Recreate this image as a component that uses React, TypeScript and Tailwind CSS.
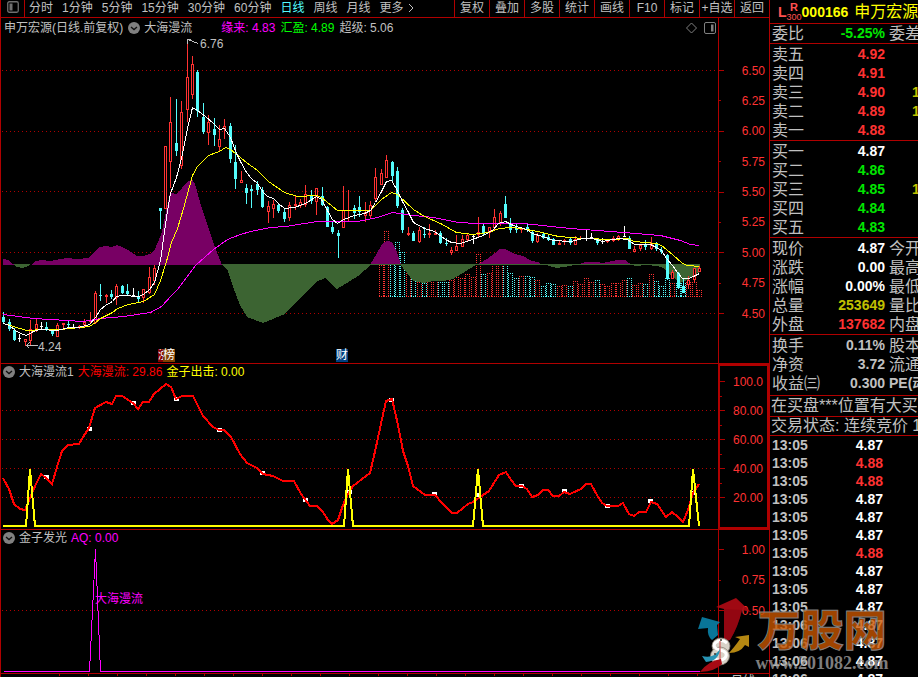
import React from "react";

type Kind = "up" | "down" | "flat";

// kind, high, body top, body bottom, low
type Candle = [Kind, number, number, number, number];

interface AxisMark {
    label?: string;
}

interface Quote {
    name: string;
    price: string;
    color: string;
    volume?: string;
}

interface Stat {
    name: string;
    value: string;
    color: string;
    next: string;
}

const periods = ["分时", "1分钟", "5分钟", "15分钟", "30分钟", "60分钟", "日线", "周线", "月线"];
const tools = ["复权", "叠加", "多股", "统计", "画线", "F10", "标记", "+自选", "返回"];

const candles: Candle[] = [
    ["down", 312, 317, 322, 323], ["down", 319, 322, 329, 331], ["down", 328, 330, 340, 341], ["flat", 334, 338, 338, 342],
    ["up", 339, 339, 342, 346], ["up", 320, 329, 341, 345], ["up", 319, 324, 329, 332], ["flat", 322, 326, 326, 329],
    ["down", 322, 327, 329, 331], ["down", 329, 331, 334, 336], ["up", 323, 325, 337, 337], ["up", 323, 323, 325, 330],
    ["down", 321, 324, 325, 327], ["flat", 324, 327, 327, 328], ["up", 325, 326, 328, 329], ["up", 319, 322, 325, 328],
    ["up", 312, 320, 322, 324], ["up", 291, 293, 323, 324], ["down", 284, 295, 296, 301], ["up", 294, 295, 297, 303],
    ["down", 290, 294, 297, 299], ["up", 284, 286, 298, 305], ["down", 285, 286, 293, 294], ["down", 284, 291, 294, 295],
    ["flat", 288, 295, 295, 297], ["down", 291, 296, 299, 302], ["up", 289, 289, 298, 303], ["up", 267, 277, 293, 294],
    ["up", 265, 268, 281, 285], ["down", 208, 208, 211, 229], ["up", 146, 146, 209, 209], ["up", 97, 122, 162, 188],
    ["down", 99, 143, 151, 156], ["up", 101, 112, 166, 169], ["up", 40, 77, 110, 122], ["up", 56, 64, 95, 99],
    ["down", 70, 72, 111, 117], ["down", 103, 117, 132, 134], ["up", 115, 122, 133, 145], ["down", 118, 129, 135, 146],
    ["up", 125, 139, 147, 151], ["up", 119, 126, 129, 139], ["down", 123, 126, 159, 163], ["down", 145, 162, 179, 189],
    ["up", 171, 180, 183, 183], ["down", 184, 188, 193, 204], ["down", 185, 189, 191, 208], ["down", 181, 184, 190, 195],
    ["down", 187, 190, 207, 208], ["up", 201, 206, 212, 223], ["up", 200, 204, 209, 218], ["down", 203, 205, 211, 213],
    ["down", 208, 212, 219, 222], ["up", 202, 205, 218, 221], ["up", 196, 204, 206, 210], ["up", 199, 202, 206, 208],
    ["up", 185, 194, 205, 207], ["down", 190, 195, 201, 204], ["up", 188, 188, 202, 215], ["down", 187, 196, 205, 206],
    ["down", 206, 207, 227, 227], ["down", 222, 227, 232, 234], ["down", 230, 233, 236, 258], ["up", 186, 210, 228, 228],
    ["up", 190, 210, 211, 222], ["down", 205, 208, 213, 219], ["down", 196, 207, 212, 217], ["up", 202, 212, 216, 222],
    ["up", 201, 205, 216, 218], ["up", 168, 177, 199, 202], ["up", 169, 173, 185, 185], ["up", 155, 160, 178, 178],
    ["down", 161, 162, 176, 183], ["down", 167, 171, 206, 208], ["down", 208, 210, 230, 233], ["up", 227, 233, 235, 236],
    ["down", 231, 233, 241, 241], ["up", 227, 230, 242, 243], ["down", 227, 234, 235, 238], ["up", 224, 233, 235, 238],
    ["up", 230, 233, 235, 235], ["down", 231, 233, 243, 244], ["down", 238, 243, 244, 246], ["up", 247, 250, 253, 255],
    ["up", 235, 246, 251, 251], ["up", 235, 239, 247, 247], ["up", 233, 235, 240, 242], ["flat", 234, 236, 236, 244],
    ["up", 217, 232, 235, 237], ["down", 223, 226, 234, 235], ["up", 227, 227, 233, 238], ["up", 209, 217, 228, 231],
    ["up", 211, 213, 224, 226], ["down", 196, 204, 218, 218], ["down", 218, 224, 230, 233], ["down", 223, 228, 230, 233],
    ["up", 227, 228, 230, 233], ["down", 223, 227, 229, 232], ["down", 230, 232, 241, 243], ["up", 233, 235, 242, 243],
    ["down", 233, 234, 238, 239], ["down", 235, 237, 240, 241], ["down", 238, 239, 245, 245], ["up", 241, 243, 245, 245],
    ["up", 239, 240, 242, 245], ["down", 238, 239, 243, 245], ["up", 236, 239, 245, 245], ["up", 236, 238, 239, 240],
    ["flat", 230, 238, 238, 241], ["flat", 233, 237, 237, 238], ["down", 238, 239, 243, 245], ["flat", 238, 241, 241, 244],
    ["up", 240, 240, 242, 243], ["up", 236, 238, 241, 242], ["up", 235, 236, 239, 241], ["flat", 226, 236, 236, 237],
    ["down", 236, 238, 249, 249], ["up", 246, 249, 252, 252], ["up", 244, 245, 249, 251], ["down", 240, 245, 247, 250],
    ["up", 237, 243, 249, 250], ["down", 242, 244, 249, 251], ["down", 247, 250, 252, 254], ["down", 254, 255, 279, 280],
    ["up", 270, 272, 279, 279], ["down", 272, 273, 288, 289], ["down", 278, 286, 293, 293], ["up", 276, 280, 285, 289],
    ["up", 268, 268, 280, 283], ["up", 266, 268, 272, 272],
];

// tops of the turnover bars, the first one belongs to candle 70
const VOLUME_START = 70;
const volumeTops = [
    265, 231, 263, 242, 252, 273, 277, 282, 283, 280, 280, 282, 282, 280, 277, 278, 274, 277, 254, 274,
    273, 264, 258, 264, 273, 278, 276, 276, 277, 280, 286, 283, 284, 286, 285, 286, 281, 284, 278, 282,
    280, 284, 286, 283, 283, 280, 278, 285, 283, 284, 274, 281, 286, 278, 283, 283, 283, 282, 282, 290,
];

const MA_WHITE =
    "3,323 9,325 15,330 20,333 26,335 33,331 39,329 57,330 68,327 78,327 89,324 95,317 100,309 105,305 112,301 116,296 122,295 138,296 143,294 149,289 154,282 160,260 166,217 170,193 176,177 181,158 187,128 192,107 197,110 205,116 213,123 219,129 224,128 230,137 236,153 240,161 246,172 251,178 257,183 263,192 267,196 273,198 278,203 284,208 294,207 305,203 316,196 321,199 327,210 332,219 337,223 343,219 354,215 364,213 370,210 375,202 381,191 386,181 391,180 397,190 402,201 408,212 413,222 424,228 434,231 445,239 451,242 460,243 472,239 483,235 493,229 498,223 505,221 513,225 526,229 532,233 542,236 553,240 570,241 583,238 592,238 602,241 618,238 627,239 634,244 645,244 650,244 656,247 661,250 666,258 672,265 677,272 682,278 688,278 693,276 699,273";
const MA_YELLOW =
    "3,323 26,330 43,329 60,329 89,326 95,322 100,318 112,312 117,308 128,304 143,301 154,294 160,280 166,261 171,242 177,228 183,208 192,175 197,166 208,155 219,151 225,147 230,149 235,153 246,162 257,170 268,181 284,192 297,196 316,195 321,197 337,210 370,210 381,199 391,192 397,194 413,209 424,216 440,223 456,232 472,234 488,232 499,228 510,227 521,228 537,231 558,236 583,238 613,239 627,238 634,241 656,243 661,245 672,254 682,263 687,265 699,266";
const MA_PINK =
    "3,314 33,318 83,321 100,318 123,316 150,312 161,306 171,295 177,289 195,265 213,249 227,239 240,234 250,231 270,227 285,226 317,221 357,221 377,217 392,212 413,215 433,217 458,222 477,223 523,223 570,228 623,232 660,235 680,240 690,244 699,245";

const PURPLE_AREA =
    "M3 265V259L8 260L13 264L15 265ZM31 265L35 261L42 260L50 261L67 258L77 259L88 258L95 251L100 247L106 246L112 247L117 245L122 247L128 250L137 256L143 256L150 254L154 251L158 242L162 232L167 207L170 193L177 194L182 188L186 183L192 179L195 184L200 202L207 223L213 242L222 265ZM370 265L377 253L383 243L387 241L392 242L397 252L401 265ZM477 265L487 259L495 253L500 249L505 249L515 254L523 256L532 261L538 262L543 265ZM577 265L585 262L597 262L603 263L617 260L625 260L632 265Z";
const GREEN_AREA =
    "M13 264L17 267L23 268L28 266L31 264ZM222 264L228 271L233 287L240 305L247 317L263 323L285 314L300 298L316 282L325 278L337 289L350 281L358 276L372 264ZM400 264L407 273L413 281L423 283L433 281L443 281L453 279L463 273L477 264ZM543 264L552 267L557 268L570 266L577 264ZM632 264L635 266L647 265L657 266L663 268L668 273L680 283L687 280L695 275L700 272V264Z";

const WAVE =
    "3,478 9,489 14,504 20,509 25,510 30,498 36,484 41,474 46,478 52,484 57,467 62,451 68,445 79,444 83,437 89,428 95,408 106,402 112,404 116,396 122,396 133,403 138,409 143,402 149,402 154,394 166,384 171,387 176,399 182,396 193,396 203,416 213,427 219,430 224,430 231,437 240,454 247,463 257,468 263,474 273,476 283,481 294,481 301,494 310,506 317,506 323,512 328,520 332,524 338,520 343,505 349,492 353,486 370,473 376,447 382,419 386,401 392,399 398,425 403,451 408,466 413,486 425,495 435,495 442,503 452,513 457,513 468,504 473,502 483,495 489,491 499,475 506,472 511,480 516,486 522,486 527,489 532,497 538,495 543,490 548,490 553,496 559,496 564,492 570,494 581,489 586,484 591,484 597,495 602,503 607,506 618,506 623,503 629,514 634,516 639,512 646,512 651,502 657,504 666,517 672,512 678,517 683,522 688,510 693,493 699,484";
const SPIKES =
    "3,526 26,526 30,469 35,526 344,526 348,469 353,526 473,526 478,469 483,526 689,526 693,469 699,526";
const waveDots = [
    [46, 477], [89, 429], [133, 403], [176, 399], [219, 430], [262, 473], [305, 500], [349, 492],
    [391, 400], [434, 494], [478, 495], [521, 486], [564, 491], [607, 506], [650, 501], [693, 493],
];

const priceMarks: AxisMark[] = [
    { label: "6.50" }, { label: "6.25" }, { label: "6.00" }, { label: "5.75" }, { label: "5.50" },
    { label: "5.25" }, { label: "5.00" }, { label: "4.75" }, { label: "4.50" },
];
const waveMarks: AxisMark[] = [
    { label: "100.0" }, {}, { label: "80.00" }, {}, { label: "60.00" }, {}, { label: "40.00" }, {}, { label: "20.00" },
];
const signalMarks: AxisMark[] = [{ label: "1.00" }, { label: "0.75" }, { label: "0.50" }];

const sells: Quote[] = [
    { name: "卖五", price: "4.92", color: "text-[#ff3232]" },
    { name: "卖四", price: "4.91", color: "text-[#ff3232]" },
    { name: "卖三", price: "4.90", color: "text-[#ff3232]", volume: "1" },
    { name: "卖二", price: "4.89", color: "text-[#ff3232]", volume: "1" },
    { name: "卖一", price: "4.88", color: "text-[#ff3232]" },
];
const buys: Quote[] = [
    { name: "买一", price: "4.87", color: "text-white" },
    { name: "买二", price: "4.86", color: "text-[#00e600]" },
    { name: "买三", price: "4.85", color: "text-[#00e600]", volume: "1" },
    { name: "买四", price: "4.84", color: "text-[#00e600]" },
    { name: "买五", price: "4.83", color: "text-[#00e600]" },
];
const stats: Stat[] = [
    { name: "现价", value: "4.87", color: "text-white", next: "今开" },
    { name: "涨跌", value: "0.00", color: "text-white", next: "最高" },
    { name: "涨幅", value: "0.00%", color: "text-white", next: "最低" },
    { name: "总量", value: "253649", color: "text-[#c0c000]", next: "量比" },
    { name: "外盘", value: "137682", color: "text-[#ff3232]", next: "内盘" },
];
const fundamentals: Stat[] = [
    { name: "换手", value: "0.11%", color: "text-[#c0c0c0]", next: "股本" },
    { name: "净资", value: "3.72", color: "text-[#c0c0c0]", next: "流通" },
    { name: "收益㈢", value: "0.300", color: "text-[#c0c0c0]", next: "PE(动)" },
];
const trades = [
    ["13:05", "4.87"], ["13:05", "4.88"], ["13:05", "4.88"], ["13:05", "4.87"], ["13:05", "4.87"],
    ["13:05", "4.87"], ["13:05", "4.88"], ["13:05", "4.87"], ["13:05", "4.87"], ["13:05", "4.87"],
    ["13:06", "4.87"], ["13:06", "4.87"], ["13:06", "4.87"], ["13:06", "4.87"],
];

const candleX = (index: number) => Math.round(3.2 + index * 5.395);

const GridLine: React.FC<{ y: number }> = ({ y }) => (
    <line x1="2" x2="717" y1={y + 0.5} y2={y + 0.5} stroke="#b00000" strokeDasharray="1 3" />
);

const CandleShape: React.FC<{ candle: Candle; x: number }> = ({ candle, x }) => {
    const [kind, high, top, bottom, low] = candle;
    if (kind === "flat") {
        return (
            <g fill="#ffffff">
                <rect x={x} y={high} width="1" height={low - high} />
                <rect x={x - 1} y={top} width="3" height="1" />
            </g>
        );
    }
    if (kind === "down") {
        return (
            <g fill="#54fcfc">
                <rect x={x} y={high} width="1" height={low - high} />
                <rect x={x - 1} y={top} width="3" height={Math.max(bottom - top, 1)} />
            </g>
        );
    }
    return (
        <g fill="#ff3232">
            <rect x={x} y={high} width="1" height={low - high} />
            <rect x={x - 1} y={top} width="3" height={Math.max(bottom - top, 1)} />
            {bottom - top > 2 && <rect x={x} y={top + 1} width="1" height={bottom - top - 2} fill="#000000" />}
        </g>
    );
};

const CollapseButton: React.FC<{ label: string }> = ({ label }) => (
    <button type="button" aria-label={label} className="shrink-0">
        <svg viewBox="0 0 12 12" className="size-3 block">
            <circle cx="6" cy="6" r="6" fill="#808080" />
            <path d="M3 5l3 2.6L9 5" fill="none" stroke="#101010" strokeWidth="1.3" />
        </svg>
    </button>
);

const AxisScale: React.FC<{ marks: AxisMark[]; className: string }> = ({ marks, className }) => (
    <div className={`flex flex-col justify-between ${className}`}>
        {marks.map((mark, index) => (
            <div key={index} className="flex h-px items-center justify-between pr-1 text-[#ff3232]">
                <span className={index % 2 === 0 ? "h-px w-[5px] bg-[#b00000]" : "h-px w-[2px] bg-[#b00000]"} />
                <span>{mark.label}</span>
            </div>
        ))}
    </div>
);

const Toolbar = () => (
    <nav className="flex h-[18px] items-start border-b border-[#b00000] leading-4 whitespace-nowrap">
        <button type="button" aria-label="侧栏" className="flex h-[17px] w-6 justify-center border-r border-[#b00000] pt-px">
            <svg viewBox="0 0 12 12" className="size-3">
                <rect x="0.75" y="0.75" width="10.5" height="10.5" rx="1.5" fill="none" stroke="#707070" strokeWidth="1.3" />
                <rect x="2.5" y="2.5" width="3" height="7" fill="#707070" />
            </svg>
        </button>
        <div className="flex flex-1 gap-[9px] pl-1">
            {periods.map((period) => (
                <button key={period} type="button" className={period === "日线" ? "text-[#54fcfc]" : ""}>
                    {period}
                </button>
            ))}
            <button type="button" className="flex items-center gap-1">
                更多
                <svg viewBox="0 0 6 10" className="h-2.5 w-1.5">
                    <path d="M1 1l4 4-4 4" fill="none" stroke="#c0c0c0" />
                </svg>
            </button>
        </div>
        {tools.map((tool) => (
            <button key={tool} type="button" className="h-[17px] w-[35px] border-l border-[#b00000] pb-px">
                {tool}
            </button>
        ))}
    </nav>
);

const PricePanel = () => (
    <section className="flex border-b border-[#b00000]">
        <div className="relative min-w-0 flex-1">
            <div className="flex h-5 items-center pl-[3px] pr-[2px] whitespace-nowrap">
                <span>申万宏源(日线.前复权)</span>
                <span className="ml-[5px] mr-1 flex">
                    <CollapseButton label="大海漫流" />
                </span>
                <span>大海漫流</span>
                <span className="ml-[29px] flex gap-[5px]">
                    <span className="text-[#ff00ff]">缘来: 4.83</span>
                    <span className="text-[#00ff00]">汇盈: 4.89</span>
                    <span>超级: 5.06</span>
                </span>
                <svg viewBox="0 0 30 12" className="ml-auto h-3 w-[30px]" fill="none" stroke="#808080">
                    <path d="M5.5 1l5 5-5 5-5-5z" />
                    <rect x="18.5" y="0.5" width="11" height="11" rx="1.5" />
                    <rect x="25" y="2.5" width="2.5" height="7" fill="#808080" stroke="none" />
                </svg>
            </div>
            <svg viewBox="1 38 717 325" preserveAspectRatio="none" className="block h-[325px] w-full" shapeRendering="crispEdges">
                {[70, 131, 191, 252, 313].map((y) => (
                    <GridLine key={y} y={y} />
                ))}
                {volumeTops.map((top, index) => {
                    const x = candleX(index + VOLUME_START);
                    const stroke = candles[index + VOLUME_START][0] === "down" ? "#54fcfc" : "#ff3232";
                    return (
                        <path
                            key={index}
                            d={`M${x - 1.5} ${top}V297M${x + 2.5} ${top}V297M${x - 2} ${top + 0.5}H${x + 3}M${x - 2} 296.5H${x + 3}`}
                            stroke={stroke}
                            strokeDasharray="1 1"
                        />
                    );
                })}
                <path d={PURPLE_AREA} fill="#780064" />
                <path d={GREEN_AREA} fill="#3c6432" />
                <rect x="222" y="264" width="478" height="1" fill="#3c6432" />
                {candles.map((candle, index) => (
                    <CandleShape key={index} candle={candle} x={candleX(index)} />
                ))}
                <g fill="none" transform="translate(0.5 0.5)">
                    <polyline points={MA_PINK} stroke="#ff00ff" />
                    <polyline points={MA_YELLOW} stroke="#ffff00" />
                    <polyline points={MA_WHITE} stroke="#ffffff" />
                    <path d="M198 43L187 39M187 43V39H190M37 345H26M29 342L26 345L29 348" stroke="#c0c0c0" />
                </g>
                <g fill="#c0c0c0" fontSize="12">
                    <text x="200" y="48">6.76</text>
                    <text x="38" y="351">4.24</text>
                </g>
            </svg>
            <div className="absolute bottom-px left-[157px] flex h-[13px] leading-[13px] text-white">
                <span className="w-[5px] overflow-hidden bg-[#800000]">涨</span>
                <span className="bg-[#804000]">榜</span>
            </div>
            <span className="absolute bottom-px left-[335px] h-[13px] bg-[#004080] leading-[13px] text-white">财</span>
        </div>
        <div className="w-[51px] border-l border-[#b00000]">
            <AxisScale marks={priceMarks} className="mt-[52px] h-[244px]" />
        </div>
    </section>
);

const WavePanel = () => (
    <section className="flex border-b border-[#b00000]">
        <div className="min-w-0 flex-1">
            <div className="flex h-4 items-center gap-1 pl-[2px] whitespace-nowrap">
                <CollapseButton label="大海漫流1" />
                <span>大海漫流1</span>
                <span className="text-[#ff0000]">大海漫流: 29.86</span>
                <span className="text-[#ffff00]">金子出击: 0.00</span>
            </div>
            <svg viewBox="1 380 717 149" preserveAspectRatio="none" className="block h-[149px] w-full" shapeRendering="crispEdges">
                {[410, 439, 468, 497].map((y) => (
                    <GridLine key={y} y={y} />
                ))}
                {waveDots.map(([x, y]) => (
                    <rect key={x} x={x - 2} y={y - 2} width="5" height="4" fill="#ffffff" />
                ))}
                <polyline points={WAVE} fill="none" stroke="#ff0000" strokeWidth="2" />
                <polyline points={SPIKES} fill="none" stroke="#ffff00" strokeWidth="2" />
            </svg>
        </div>
        <div className="w-[51px] border-2 border-[#b00000]">
            <AxisScale marks={waveMarks} className="mt-[15px] h-[117px]" />
        </div>
    </section>
);

const SignalPanel = () => (
    <section className="flex border-b border-[#b00000]">
        <div className="min-w-0 flex-1">
            <div className="flex h-4 items-center gap-1 pl-[2px] whitespace-nowrap">
                <CollapseButton label="金子发光" />
                <span>金子发光</span>
                <span className="text-[#ff00ff]">AQ: 0.00</span>
            </div>
            <svg viewBox="1 546 717 127" preserveAspectRatio="none" className="block h-[127px] w-full" shapeRendering="crispEdges">
                <GridLine y={610} />
                <polyline
                    points="3.5,671.5 89.5,671.5 95.5,549.5 100.5,671.5 699.5,671.5"
                    fill="none"
                    stroke="#ff00ff"
                />
                <text x="95" y="603" fontSize="12" fill="#ff00ff">大海漫流</text>
            </svg>
        </div>
        <div className="w-[51px] border-l border-[#b00000]">
            <AxisScale marks={signalMarks} className="mt-[19px] h-[62px]" />
        </div>
    </section>
);

const TimeAxis = () => (
    <div className="flex h-[3px] overflow-hidden">
        <div className="flex flex-1 gap-7 overflow-hidden pl-[58px]">
            {Array.from({ length: 23 }, (_, index) => (
                <span key={index} className="h-[2px] w-px shrink-0 bg-[#b00000]" />
            ))}
        </div>
        <div className="w-[51px] border-l border-[#b00000] pl-3 leading-[14px]">日线</div>
    </div>
);

const QuoteTable: React.FC<{ quotes: Quote[] }> = ({ quotes }) => (
    <table className="w-[200px] table-fixed border-collapse">
        <tbody>
            {quotes.map((quote) => (
                <tr key={quote.name} className="h-[19px]">
                    <th scope="row" className="w-[56px] p-0 pl-[2px] text-left text-base leading-[19px] font-normal">{quote.name}</th>
                    <td className={`w-[59px] p-0 text-right text-sm leading-[19px] font-bold ${quote.color}`}>{quote.price}</td>
                    <td className="p-0 pl-[27px] text-sm leading-[19px] font-bold text-[#c0c000]">{quote.volume}</td>
                </tr>
            ))}
        </tbody>
    </table>
);

const StatTable: React.FC<{ stats: Stat[] }> = ({ stats }) => (
    <table className="w-[200px] table-fixed border-collapse whitespace-nowrap">
        <tbody>
            {stats.map((stat) => (
                <tr key={stat.name} className="h-[19px]">
                    <th scope="row" className="w-[56px] p-0 pl-[2px] text-left text-base leading-[19px] font-normal">{stat.name}</th>
                    <td className={`w-[59px] p-0 text-right text-sm leading-[19px] font-bold ${stat.color}`}>{stat.value}</td>
                    <td
                        className={
                            stat.next.startsWith("PE")
                                ? "p-0 pl-1 text-sm leading-[19px] font-bold"
                                : "p-0 pl-1 text-base leading-[19px]"
                        }
                    >
                        {stat.next}
                    </td>
                </tr>
            ))}
        </tbody>
    </table>
);

const QuotePanel = () => (
    <aside className="w-[149px] shrink-0 overflow-hidden border-l border-[#b00000] whitespace-nowrap">
        <header className="flex h-6 items-center border-b border-[#b00000] pl-2 text-[#ff5050]">
            <span className="w-[10px] text-sm leading-4 font-bold">L</span>
            <span className="flex w-[15px] flex-col items-center text-[9px] leading-[10px]">
                <b className="text-[11px] leading-[10px]">R</b>
                <span>300</span>
            </span>
            <h1 className="flex items-center gap-[6px] leading-5 text-[#ffff00]">
                <b className="text-sm leading-5">000166</b>
                <span className="text-base leading-5">申万宏源</span>
            </h1>
        </header>
        <div className="border-b border-[#b00000]">
            <StatTable stats={[{ name: "委比", value: "-5.25%", color: "text-[#00e600]", next: "委差" }]} />
        </div>
        <div className="border-b border-[#b00000] pt-px">
            <QuoteTable quotes={sells} />
        </div>
        <div className="border-b border-[#b00000] pt-px">
            <QuoteTable quotes={buys} />
        </div>
        <div className="border-b border-[#b00000] pt-px">
            <StatTable stats={stats} />
        </div>
        <div className="border-b border-[#b00000] pt-px pb-[2px]">
            <StatTable stats={fundamentals} />
        </div>
        <p className="border-b border-[#b00000] pl-px text-base leading-5">在买盘***位置有大买单</p>
        <p className="border-b border-[#b00000] pl-px text-base leading-[18px]">交易状态: 连续竞价 13</p>
        <table className="w-[113px] table-fixed border-collapse text-sm leading-[18px] font-bold">
            <tbody>
                {trades.map(([time, price], index) => (
                    <tr key={index} className="h-[18px]">
                        <td className="p-0 pl-[2px]">{time}</td>
                        <td className={price === "4.88" ? "p-0 text-right text-[#ff3232]" : "p-0 text-right text-white"}>
                            {price}
                        </td>
                    </tr>
                ))}
            </tbody>
        </table>
    </aside>
);

const Watermark = () => (
    <div className="pointer-events-none absolute right-[26px] bottom-1 flex items-end">
        <svg viewBox="0 0 54 76" className="h-[76px] w-[54px]">
            <path d="M38 1L18 10L26 12V44L32 43Q40 30 44 13L53 15Z" fill="#b00a14" opacity="0.9" />
            <path d="M26 12V44L32 43Q40 30 44 13Z" fill="#8c0510" opacity="0.6" />
            <path d="M4 20L22 25L19 28L20 38L14 43Q9 39 10 31L0 32Z" fill="#0a82a8" opacity="0.9" />
            <path d="M51 38V50L47 48Q42 56 31 56Q38 48 42 42L37 40Z" fill="#c89614" opacity="0.9" />
            <g stroke="#8c8478" strokeWidth="0.8" fill="#d8d2c8">
                <ellipse cx="23" cy="49" rx="9" ry="8" />
                <ellipse cx="22" cy="59" rx="9.5" ry="9" />
            </g>
            <path d="M29 46Q23 41 17 46Q14 51 22 53Q31 55 27 61Q21 66 15 60" fill="none" stroke="#ffffff" strokeWidth="3" />
            <path d="M22 44V67" stroke="#d04040" strokeWidth="1" />
            <path d="M4 59Q16 62 22 52Q21 64 8 65Z" fill="#2894b4" />
            <path d="M2 75Q10 64 23 62L24 67Q18 74 2 75Z" fill="#a80a14" />
            <circle cx="23" cy="43" r="1" fill="#403830" />
            <circle cx="17" cy="57" r="1" fill="#403830" />
        </svg>
        <div className="flex w-[140px] flex-col items-center whitespace-nowrap">
            <span className="text-[43px] leading-[44px] font-black text-[#c85500]/80 [-webkit-text-stroke:1px_#808080]">万股网</span>
            <span className="font-['Liberation_Serif',serif] text-lg leading-5 font-bold text-[#a0a0a0]/80">www.201082.com</span>
        </div>
    </div>
);

export default function App() {
    return (
        <div className="relative flex h-screen overflow-hidden bg-black font-['Liberation_Sans','Noto_Sans_CJK_SC',sans-serif] text-xs text-[#c0c0c0]">
            <main className="min-w-0 flex-1 border-l border-[#b00000]">
                <Toolbar />
                <PricePanel />
                <WavePanel />
                <SignalPanel />
                <TimeAxis />
            </main>
            <QuotePanel />
            <Watermark />
        </div>
    );
}
